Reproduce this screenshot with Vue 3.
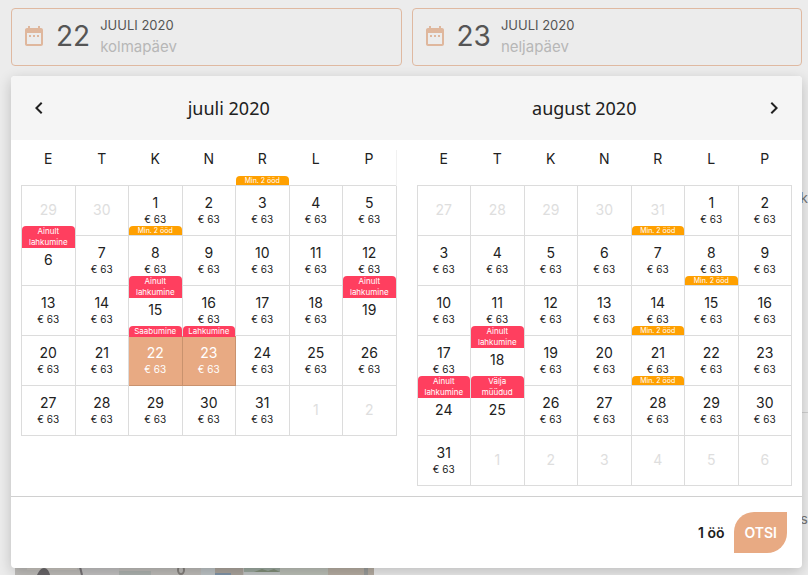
<script setup>
import { ref } from 'vue'

const fields = [
  { id: 'arrival', day: '22', month: 'JUULI 2020', weekday: 'kolmapäev' },
  { id: 'departure', day: '23', month: 'JUULI 2020', weekday: 'neljapäev' },
]
const weekdays = ['E', 'T', 'K', 'N', 'R', 'L', 'P']

const stay = { text: 'Min. 2 ööd', kind: 'stay' }
const leaveOnly = { text: 'Ainult lahkumine', kind: 'alert', closed: true }
const soldOut = { text: 'Välja müüdud', kind: 'alert', closed: true }

// Builds the weeks of a month, padded with the days of its neighbours.
function buildWeeks(lead, leadEnd, length, notes, selected = []) {
  const cells = []
  for (let i = lead - 1; i >= 0; i--) {
    cells.push({ day: leadEnd - i, outside: true })
  }
  for (let day = 1; day <= length; day++) {
    cells.push({ day, note: notes[day], selected: selected.includes(day) })
  }
  for (let day = 1; cells.length % 7; day++) cells.push({ day, outside: true })
  const weeks = []
  while (cells.length) weeks.push(cells.splice(0, 7))
  return weeks
}

const months = ref([
  {
    title: 'juuli 2020',
    weeks: buildWeeks(2, 30, 31, {
      3: stay,
      6: leaveOnly,
      8: stay,
      15: leaveOnly,
      19: leaveOnly,
      22: { text: 'Saabumine', kind: 'alert' },
      23: { text: 'Lahkumine', kind: 'alert' },
    }, [22, 23]),
  },
  {
    title: 'august 2020',
    weeks: buildWeeks(5, 31, 31, {
      7: stay,
      15: stay,
      18: leaveOnly,
      21: stay,
      24: leaveOnly,
      25: soldOut,
      28: stay,
    }),
  },
])
</script>

<template>
  <div class="page">
    <div class="search">
      <div class="fields">
        <button v-for="f in fields" :key="f.id" type="button" class="field">
          <svg class="icon" viewBox="0 0 24 24" aria-hidden="true">
            <path d="M9 11H7v2h2v-2zm4 0h-2v2h2v-2zm4 0h-2v2h2v-2zm2-7h-1V2h-2v2H8V2H6v2H5c-1.11 0-1.99.9-1.99 2L3 20c0 1.1.89 2 2 2h14c1.1 0 2-.9 2-2V6c0-1.1-.9-2-2-2zm0 16H5V9h14v11z" />
          </svg>
          <span class="field-day">{{ f.day }}</span>
          <span class="field-text">
            <span class="month-name">{{ f.month }}</span>
            <span class="weekday">{{ f.weekday }}</span>
          </span>
        </button>
      </div>

      <section class="picker">
        <header class="picker-head">
          <div class="head-half">
            <button type="button" class="nav" aria-label="Eelmine kuu">
              <svg class="icon" viewBox="0 0 24 24"><path d="M15.41 7.41L14 6l-6 6 6 6 1.41-1.41L10.83 12z" /></svg>
            </button>
            <h2>{{ months[0].title }}</h2>
          </div>
          <div class="head-half">
            <h2>{{ months[1].title }}</h2>
            <button type="button" class="nav nav-next" aria-label="Järgmine kuu">
              <svg class="icon" viewBox="0 0 24 24"><path d="M10 6L8.59 7.41 13.17 12l-4.58 4.59L10 18l6-6z" /></svg>
            </button>
          </div>
        </header>

        <div class="months">
          <div v-for="m in months" :key="m.title" class="month">
            <table>
              <thead>
                <tr><th v-for="d in weekdays" :key="d" scope="col">{{ d }}</th></tr>
              </thead>
              <tbody>
                <tr v-for="(week, w) in m.weeks" :key="w">
                  <td v-for="(c, i) in week" :key="i" :class="{ selected: c.selected }">
                    <button type="button" class="day" :class="{ outside: c.outside }" :disabled="c.outside">
                      <span v-if="c.note" class="note" :class="c.note.kind">{{ c.note.text }}</span>
                      <span class="number">{{ c.day }}</span>
                      <span v-if="!c.outside && !c.note?.closed" class="price">€ 63</span>
                    </button>
                  </td>
                </tr>
              </tbody>
            </table>
          </div>
        </div>

        <footer class="picker-foot">
          <strong>1 öö</strong>
          <button type="button" class="submit">OTSI</button>
        </footer>
      </section>
    </div>

    <main class="listing">
      <p>k</p>
      <hr />
      <p>us</p>
      <svg class="photo" viewBox="0 0 359 16" preserveAspectRatio="none" aria-hidden="true">
        <rect width="359" height="16" fill="#bfbdba" />
        <rect x="12" width="50" height="11" fill="#c8c4be" />
        <rect x="66" width="38" height="16" fill="#c3c2c2" />
        <rect x="104" y="12" width="32" height="4" fill="#aeb3b0" />
        <path d="M22 16c2-4 4-7 7-7s5 3 6 7z" fill="#6a676a" />
        <path d="M65 8l2 8" stroke="#777376" stroke-width="2" />
        <ellipse cx="166" cy="11" rx="3" ry="4" fill="none" stroke="#85817d" stroke-width="2" />
        <rect x="186" width="14" height="16" fill="#bec4c6" />
        <rect x="200" width="28" height="16" fill="#aca59d" />
        <rect x="200" y="14" width="16" height="2" fill="#8195a8" />
        <rect x="229" width="36" height="16" fill="#9daaa0" />
        <path d="M239 13l8-3 6 2 6-2 6 3z" fill="#82907a" />
        <rect x="229" y="13" width="36" height="3" fill="#c4c8c8" />
        <rect x="265" width="48" height="16" fill="#bcc0b8" />
        <rect x="313" width="46" height="16" fill="#b7aea3" />
        <rect x="349" width="4" height="16" fill="#9b9d9b" />
      </svg>
    </main>
  </div>
</template>

<style>
body {
  margin: 0;
  background: #ececec;
}
</style>

<style scoped>
.page {
  min-height: 100vh;
  box-sizing: border-box;
  overflow: hidden;
  background: #ececec;
  color: #212121;
  font-family: Inter, "Liberation Sans", sans-serif;
  font-size: 14px;
}
button {
  font: inherit;
  color: inherit;
  background: none;
  border: 0;
  margin: 0;
  padding: 0;
  cursor: pointer;
}
.icon {
  display: block;
  flex: none;
  width: 24px;
  height: 24px;
  fill: currentColor;
}
.search {
  position: relative;
  margin: 8px 6px 0 11px;
}
.fields {
  display: grid;
  grid-template-columns: 1fr 1fr;
  gap: 10px;
}
.field {
  display: flex;
  align-items: center;
  gap: 10px;
  height: 58px;
  padding: 0 10px 2px;
  border: 1px solid #dfb9a1;
  border-radius: 4px;
  color: #dfb79d;
  text-align: left;
}
.field-day {
  color: #555;
  font-size: 28px;
  line-height: 40px;
}
.field-text {
  display: flex;
  flex-direction: column;
  line-height: 21px;
}
.month-name {
  color: #555;
  font-size: 13px;
}
.weekday {
  color: #b7b7b7;
  font-size: 15px;
}
.picker {
  position: absolute;
  top: 100%;
  left: 0;
  right: 0;
  margin-top: 10px;
  border-radius: 4px;
  background: #fff;
  box-shadow: 0 4px 14px rgba(0, 0, 0, 0.2);
}
.picker-head {
  display: grid;
  grid-template-columns: 1fr 1fr;
  height: 64px;
  border-radius: 4px 4px 0 0;
  background: #f5f5f5;
}
.head-half {
  display: flex;
  align-items: center;
}
.head-half h2 {
  flex: 1;
  margin: 0;
  font: 400 18px/28px "Noto Sans", sans-serif;
  text-align: center;
}
.nav {
  padding-left: 16px;
}
.nav-next {
  padding: 0 16px 0 0;
}
.months {
  display: grid;
  grid-template-columns: 1fr 1fr;
}
.month {
  padding: 10px;
}
table {
  width: 100%;
  table-layout: fixed;
  border-collapse: collapse;
}
th {
  height: 35px;
  box-sizing: border-box;
  padding: 0 0 16px;
  font-weight: 400;
  line-height: 18px;
}
.month:first-child th:last-child {
  border-right: 1px solid #f1f1f1;
}
td {
  padding: 0;
  border: 1px solid #dcdcdc;
}
td.selected {
  border-right-color: #c9926e;
  border-bottom-color: #c9926e;
  background: #e8aa83;
  color: #fff;
}
.day {
  position: relative;
  display: flex;
  flex-direction: column;
  align-items: center;
  justify-content: center;
  width: 100%;
  height: 49px;
}
.day.outside {
  color: #dedede;
}
.number {
  line-height: 18px;
}
.price {
  font-size: 10px;
  line-height: 14px;
}
.note {
  position: absolute;
  top: -10px;
  left: 0;
  right: 0;
  padding: 0 3px;
  border-radius: 4px 4px 0 0;
  color: #fff;
  text-align: center;
}
.note.stay {
  background: #ffa000;
  font-size: 7px;
  line-height: 9px;
}
.note.alert {
  background: #ff3f5f;
  font-size: 8px;
  line-height: 11px;
}
.picker-foot {
  display: flex;
  align-items: center;
  justify-content: flex-end;
  gap: 10px;
  padding: 15px;
  border-top: 1px solid #d0d0d0;
}
.picker-foot strong,
.submit {
  font-weight: 600;
}
.submit {
  padding: 0 10px;
  border-radius: 20px 0 20px 0;
  background: #e8aa83;
  color: #fff;
  line-height: 41px;
}
.listing {
  display: flex;
  flex-direction: column;
  height: 509px;
  overflow: hidden;
  color: #777;
}
.listing p {
  margin: 122px 0 0;
  line-height: 20px;
  text-align: right;
}
.listing hr {
  width: 50%;
  margin: 204px 0 0 auto;
  border: 0;
  border-top: 1px solid #cfcfcf;
}
.listing hr + p {
  margin-top: 96px;
}
.photo {
  display: block;
  flex: none;
  width: 359px;
  height: 16px;
  margin: 30px 0 0 15px;
}
</style>
